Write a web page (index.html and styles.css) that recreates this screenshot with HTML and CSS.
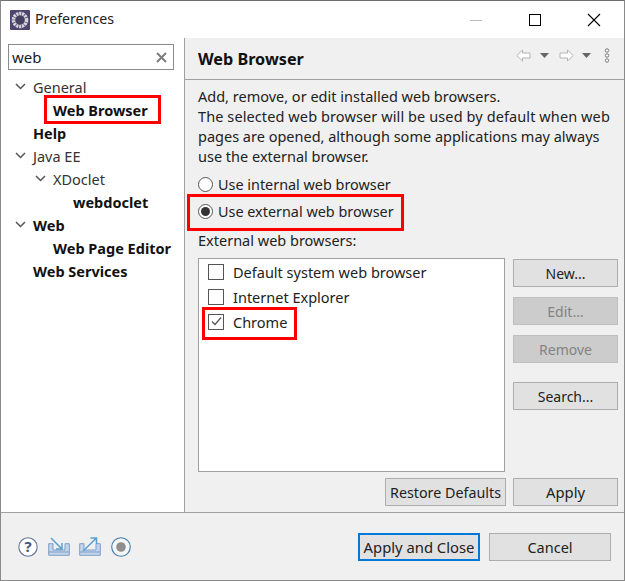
FILE: index.html
```html
<!DOCTYPE html>
<html lang="en">
<head>
<meta charset="utf-8">
<title>Preferences</title>
<link rel="stylesheet" href="styles.css">
</head>
<body>
<div class="window">
  <header class="titlebar">
    <svg class="app-icon" width="20" height="20" viewBox="0 0 20 20">
      <rect width="20" height="20" rx="1" fill="#4d4470"/>
      <circle cx="10" cy="10" r="6.500" fill="none" stroke="#d4d4da" stroke-width="3.600" stroke-dasharray="2.200 .7"/>
      <circle cx="10" cy="10" r="4.300" fill="#45405c"/>
    </svg>
    <span class="title">Preferences</span>
    <div class="winctl">
      <svg width="14" height="14" viewBox="0 0 14 14"><path d="M1 7.500H13" stroke="#bdbdbd"/></svg>
      <svg width="14" height="14" viewBox="0 0 14 14"><rect x="1.500" y="1.500" width="11" height="11" fill="none" stroke="#000"/></svg>
      <svg width="14" height="14" viewBox="0 0 14 14"><path d="M1 1L13 13M13 1L1 13" stroke="#000" stroke-width="1.100"/></svg>
    </div>
  </header>
  <div class="main">
    <aside class="sidebar">
      <div class="search">
        <span>web</span>
        <svg width="11" height="11" viewBox="0 0 11 11"><path d="M1 1L10 10M10 1L1 10" stroke="#7d7d7d" stroke-width="2"/></svg>
      </div>
      <ul class="tree">
        <li class="row lv0"><svg class="twist" width="11" height="7" viewBox="0 0 11 7"><path d="M1 1L5.500 5.500L10 1" fill="none" stroke="#555" stroke-width="1.500"/></svg>General</li>
        <li class="row lv1 bold">Web Browser</li>
        <li class="row lv0 bold">Help</li>
        <li class="row lv0"><svg class="twist" width="11" height="7" viewBox="0 0 11 7"><path d="M1 1L5.500 5.500L10 1" fill="none" stroke="#555" stroke-width="1.500"/></svg>Java EE</li>
        <li class="row lv1"><svg class="twist" width="11" height="7" viewBox="0 0 11 7"><path d="M1 1L5.500 5.500L10 1" fill="none" stroke="#555" stroke-width="1.500"/></svg>XDoclet</li>
        <li class="row lv2 bold">webdoclet</li>
        <li class="row lv0 bold"><svg class="twist" width="11" height="7" viewBox="0 0 11 7"><path d="M1 1L5.500 5.500L10 1" fill="none" stroke="#555" stroke-width="1.500"/></svg>Web</li>
        <li class="row lv1 bold">Web Page Editor</li>
        <li class="row lv0 bold">Web Services</li>
      </ul>
    </aside>
    <section class="pane">
      <div class="pane-head">
        <h1>Web Browser</h1>
        <div class="nav">
          <svg width="15" height="13" viewBox="0 0 15 13"><path d="M.8 6.500L6.500 1V4H14V9H6.500V12Z" fill="#fff" stroke="#b4b4b4"/></svg>
          <svg class="drop" width="9" height="5" viewBox="0 0 9 5"><path d="M0 0H9L4.500 5Z" fill="#666"/></svg>
          <svg class="next" width="15" height="13" viewBox="0 0 15 13"><path d="M14.200 6.500L8.500 1V4H1V9H8.500V12Z" fill="#fff" stroke="#b4b4b4"/></svg>
          <svg class="drop2" width="9" height="5" viewBox="0 0 9 5"><path d="M0 0H9L4.500 5Z" fill="#666"/></svg>
          <svg class="dots" width="6" height="15" viewBox="0 0 6 15"><g fill="#fff" stroke="#777"><circle cx="3" cy="2.500" r="1.700"/><circle cx="3" cy="7.500" r="1.700"/><circle cx="3" cy="12.500" r="1.700"/></g></svg>
        </div>
      </div>
      <div class="pane-body">
        <p class="desc">Add, remove, or edit installed web browsers.<br><span class="wide">The selected web browser will be used by default when web</span><br>pages are opened, although some applications may always<br>use the external browser.</p>
        <div class="radio first"><span class="dot"></span>Use internal web browser</div>
        <div class="radio"><span class="dot on"></span>Use external web browser</div>
        <div class="label">External web browsers:</div>
        <div class="browsers">
          <ul class="list">
            <li class="item"><span class="check"></span>Default system web browser</li>
            <li class="item"><span class="check"></span>Internet Explorer</li>
            <li class="item"><span class="check"><svg width="13" height="13" viewBox="0 0 13 13"><path d="M2 6.500L5 9.500L11 2.500" fill="none" stroke="#555" stroke-width="1.200"/></svg></span>Chrome</li>
          </ul>
          <div class="side-btns">
            <button class="btn">New...</button>
            <button class="btn off">Edit...</button>
            <button class="btn off">Remove</button>
            <button class="btn search-btn">Search...</button>
          </div>
        </div>
        <div class="pane-actions">
          <button class="btn restore">Restore Defaults</button>
          <button class="btn apply">Apply</button>
        </div>
      </div>
    </section>
  </div>
  <footer class="footer">
    <div class="tools">
      <svg width="20" height="20" viewBox="0 0 20 20"><circle cx="10" cy="10" r="9.200" fill="#fff" stroke="#66779a" stroke-width="1.100"/><text x="10" y="15" text-anchor="middle" class="q">?</text></svg>
      <svg class="tray" width="22" height="20" viewBox="0 0 22 20"><path d="M.7 6.700H5V13H17V6.700H21.300V18.300H.7Z" fill="#c3d4ea" stroke="#7f9fc8"/><path d="M.7 15H21.300" stroke="#7f9fc8"/><path d="M3 1L13.500 11.500M14 6V12H8" fill="none" stroke="#5b9ecb" stroke-width="1.500"/></svg>
      <svg class="tray2" width="22" height="20" viewBox="0 0 22 20"><path d="M.7 6.700H5V13H17V6.700H21.300V18.300H.7Z" fill="#c3d4ea" stroke="#7f9fc8"/><path d="M.7 15H21.300" stroke="#7f9fc8"/><path d="M4 14L17 1.500M11.500 1H17.500V7" fill="none" stroke="#5b9ecb" stroke-width="1.500"/></svg>
      <svg class="rec" width="20" height="20" viewBox="0 0 20 20"><circle cx="10" cy="10" r="9.300" fill="#f4f6f8" stroke="#3f7cad" stroke-width="1.100"/><circle cx="10" cy="10" r="4.800" fill="#8f8f8f"/></svg>
    </div>
    <div class="footer-btns">
      <button class="btn primary">Apply and Close</button>
      <button class="btn cancel">Cancel</button>
    </div>
  </footer>
  <div class="mark mark-tree"></div>
  <div class="mark mark-radio"></div>
  <div class="mark mark-chrome"></div>
</div>
</body>
</html>
```
FILE: styles.css
```css
* { box-sizing: border-box; }
html, body { margin: 0; padding: 0; }
body { font-family: "Noto Sans", "Open Sans", sans-serif; font-size: 14.5px; color: #1a1a1a; background: #fff; }
ul { list-style: none; margin: 0; padding: 0; }
.window { position: relative; width: 625px; height: 581px; display: flex; flex-direction: column; border: 1px solid #8a8a8a; border-top-color: #6f6f6f; overflow: hidden; }
.titlebar { height: 37px; flex: none; display: flex; align-items: center; padding-left: 9px; background: #fff; }
.app-icon { margin-right: 5px; }
.title { font-size: 14.2px; color: #222; margin-top: -2px; }
.winctl { margin-left: auto; display: flex; align-items: center; gap: 45px; padding-right: 23px; }
.main { flex: 1; display: flex; min-height: 0; }
.sidebar { width: 184px; flex: none; background: #fff; border-right: 1px solid #a0a0a0; padding: 6px 10px 0 7px; }
.search { height: 26px; border: 1px solid #8a8a8a; display: flex; align-items: center; justify-content: space-between; padding: 0 6px 0 3px; font-size: 15px; }
.tree { margin-top: 5px; margin-left: -7px; margin-right: -10px; }
.row { height: 23px; display: flex; align-items: center; position: relative; white-space: nowrap; color: #333; }
.lv0 { padding-left: 32px; }
.lv1 { padding-left: 52px; }
.lv2 { padding-left: 72px; }
.bold { font-weight: 700; color: #111; }
.twist { position: absolute; margin-left: -18px; top: 8px; }
.pane { flex: 1; min-width: 0; background: #f0f0f0; display: flex; flex-direction: column; }
.pane-head { height: 42px; flex: none; border-bottom: 1px solid #a0a0a0; display: flex; align-items: center; justify-content: space-between; padding: 0 14px 0 13px; }
h1 { margin: 1px 0 0; font-size: 16.200px; font-weight: 700; color: #111; }
.nav { display: flex; align-items: center; padding-bottom: 6px; }
.drop { margin-left: 9px; }
.next { margin-left: 10px; }
.drop2 { margin-left: 8px; }
.dots { margin-left: 13px; }
.pane-body { flex: 1; padding: 6px 6px 0 13px; display: flex; flex-direction: column; }
.desc { margin: 0 0 4px; line-height: 20px; white-space: nowrap; color: #222; }
.wide { letter-spacing: .1px; }
.radio { height: 27px; display: flex; align-items: center; color: #222; font-size: 14.4px; }
.radio.first { height: 28px; }
.dot { width: 15px; height: 15px; border: 1px solid #555; border-radius: 50%; background: #fff; margin-right: 5px; flex: none; position: relative; }
.dot.on::after { content: ""; position: absolute; left: 2px; top: 2px; width: 9px; height: 9px; border-radius: 50%; background: #333; }
.label { margin-top: 2px; height: 26px; display: flex; align-items: center; color: #222; }
.browsers { display: flex; gap: 8px; margin-top: 5px; }
.list { width: 307px; height: 214px; border: 1px solid #a0a0a0; background: #fff; }
.item { height: 25px; display: flex; align-items: center; padding-left: 9px; color: #222; }
.check { width: 16px; height: 16px; border: 1px solid #555; background: #fff; margin-right: 9px; display: flex; align-items: center; justify-content: center; flex: none; }
.side-btns { display: flex; flex-direction: column; width: 105px; padding-top: 1px; font-size: 14px; }
.btn { font: inherit; color: #222; background: #e1e1e1; border: 1px solid #adadad; padding: 0; height: 28px; }
.side-btns .btn { margin-bottom: 10px; }
.off { background: #cccccc; color: #838383; border-color: #bfbfbf; }
.side-btns .search-btn { margin-top: 9px; }
.pane-actions { display: flex; gap: 7px; margin-top: 6px; margin-left: 187px; }
.restore { width: 121px; font-size: 14.300px; }
.apply { width: 105px; font-size: 14.800px; }
.footer { height: 68px; flex: none; background: #f0f0f0; border-top: 1px solid #a0a0a0; display: flex; align-items: center; justify-content: space-between; padding: 0 13px 0 17px; }
.tools { display: flex; align-items: center; }
.q { font: 700 15px "Noto Sans", sans-serif; fill: #46587c; }
.tray { margin-left: 10px; }
.tray2 { margin-left: 9px; }
.rec { margin-left: 10px; }
.footer-btns { display: flex; gap: 9px; }
.primary { width: 122px; border: 2px solid #0078d7; font-size: 14.800px; }
.cancel { width: 122px; }
.mark { position: absolute; border: 3px solid #f00; pointer-events: none; }
.mark-tree { left: 43px; top: 94px; width: 117px; height: 29px; }
.mark-radio { left: 186px; top: 193px; width: 217px; height: 37px; }
.mark-chrome { left: 201px; top: 306px; width: 95px; height: 33px; }
```
